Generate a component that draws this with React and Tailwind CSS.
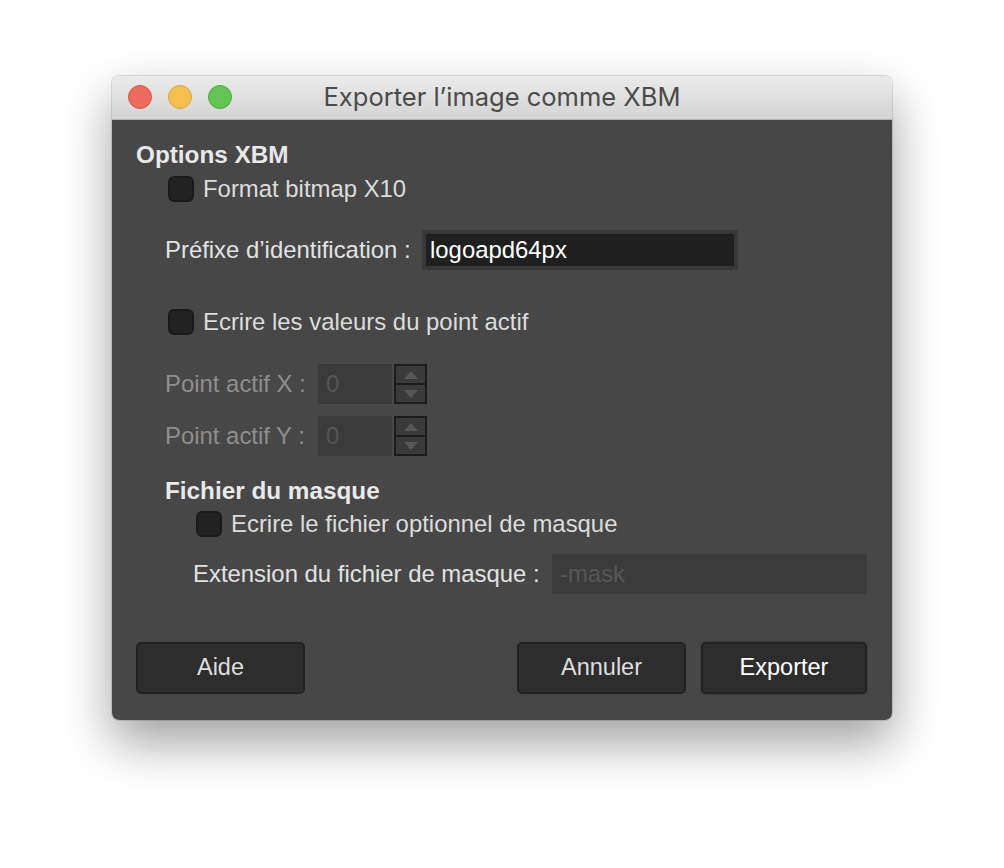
import React from "react";

const body = { fontFamily: '"Liberation Sans", Arial, sans-serif' };

function Checkbox() {
  return (
    <span className="block w-[26px] h-[26px] rounded-[6px] bg-[#222222] border-2 border-[#1a1a1a] shrink-0" />
  );
}

function SpinRow({ label, value }) {
  return (
    <div className="flex items-center h-[40px]">
      <span className="w-[153px] text-[23.9px] text-[#8e8e8e] leading-none">{label}</span>
      <div className="w-[74px] h-[40px] bg-[#3b3b3b] flex items-center pl-2 text-[23.9px] text-[#565656]">
        {value}
      </div>
      <div className="ml-[2px] w-[33px] h-[40px] bg-[#1c1c1c] p-[2px] flex flex-col gap-[2px]">
        <div className="flex-1 bg-[#3a3a3a] flex items-center justify-center">
          <svg width="14" height="8" viewBox="0 0 14 8">
            <path d="M7 0 L14 8 L0 8 Z" fill="#575757" />
          </svg>
        </div>
        <div className="flex-1 bg-[#3a3a3a] flex items-center justify-center">
          <svg width="14" height="8" viewBox="0 0 14 8">
            <path d="M0 0 L14 0 L7 8 Z" fill="#575757" />
          </svg>
        </div>
      </div>
    </div>
  );
}

function Button({ children, primary }) {
  return (
    <button
      className={
        "h-[52px] rounded-[5px] border-2 border-[#222222] bg-[#2d2d2d] text-[23.5px] " +
        (primary ? "w-[166px] text-white shadow-[0_0_2px_rgba(0,0,0,0.5)]" : "w-[169px] text-[#dedede]")
      }
      style={body}
    >
      {children}
    </button>
  );
}

export default function App() {
  return (
    <div className="min-h-[868px] w-[1004px] bg-white pt-[76px] pl-[112px]">
      <div className="w-[780px] rounded-[7px] overflow-hidden shadow-[0_22px_50px_rgba(0,0,0,0.38),0_0_0_1px_rgba(0,0,0,0.12)]">
        <div className="relative h-[44px] bg-gradient-to-b from-[#ebebeb] to-[#d4d4d4] border-b border-[#b3b3b3] flex items-center justify-center">
          <div className="absolute left-[16px] top-[9px] flex gap-[16px]">
            <span className="w-[24px] h-[24px] rounded-full bg-[#ee6a5e] border border-[#d5574a]" />
            <span className="w-[24px] h-[24px] rounded-full bg-[#f5be4f] border border-[#d9a441]" />
            <span className="w-[24px] h-[24px] rounded-full bg-[#62c554] border border-[#51a83f]" />
          </div>
          <span
            className="text-[25.5px] text-[#4b4b4b]"
            style={{ fontFamily: 'Inter, "Liberation Sans", sans-serif' }}
          >
            Exporter l’image comme XBM
          </span>
        </div>

        <div className="bg-[#474747] pl-[24px] pr-[25px] pt-[21px] pb-[26px] flex flex-col" style={body}>
          <div className="h-[28px] flex items-center text-[24.3px] font-bold text-[#e9e9e9]">Options XBM</div>

          <div className="ml-[32px] mt-[7px] flex items-center gap-[9px] h-[26px]">
            <Checkbox />
            <span className="text-[23.9px] text-[#dcdcdc]">Format bitmap X10</span>
          </div>

          <div className="ml-[29px] mt-[28px] flex items-center h-[40px]">
            <span className="w-[257px] text-[23.9px] text-[#e2e2e2]">Préfixe d’identification :</span>
            <div className="w-[316px] h-[40px] bg-[#1f1f1f] border-4 border-[#383838] flex items-center pl-[4px] text-[23.9px] text-white">
              logoapd64px
            </div>
          </div>

          <div className="ml-[32px] mt-[39px] flex items-center gap-[9px] h-[26px]">
            <Checkbox />
            <span className="text-[23.9px] text-[#dcdcdc]">Ecrire les valeurs du point actif</span>
          </div>

          <div className="ml-[29px] mt-[29px]">
            <SpinRow label="Point actif X :" value="0" />
          </div>
          <div className="ml-[29px] mt-[12px]">
            <SpinRow label="Point actif Y :" value="0" />
          </div>

          <div className="ml-[29px] mt-[21px] h-[28px] flex items-center text-[24.3px] font-bold text-[#e9e9e9]">
            Fichier du masque
          </div>

          <div className="ml-[60px] mt-[6px] flex items-center gap-[9px] h-[26px]">
            <Checkbox />
            <span className="text-[23.9px] text-[#dcdcdc]">Ecrire le fichier optionnel de masque</span>
          </div>

          <div className="ml-[57px] mt-[17px] flex items-center h-[40px]">
            <span className="w-[359px] text-[23.9px] text-[#e2e2e2]">Extension du fichier de masque :</span>
            <div className="flex-1 h-[40px] bg-[#3b3b3b] flex items-center pl-[8px] text-[23.9px] text-[#565656]">
              -mask
            </div>
          </div>

          <div className="mt-[48px] flex items-center">
            <Button>Aide</Button>
            <div className="flex-1" />
            <Button>Annuler</Button>
            <div className="w-[15px]" />
            <Button primary>Exporter</Button>
          </div>
        </div>
      </div>
    </div>
  );
}
